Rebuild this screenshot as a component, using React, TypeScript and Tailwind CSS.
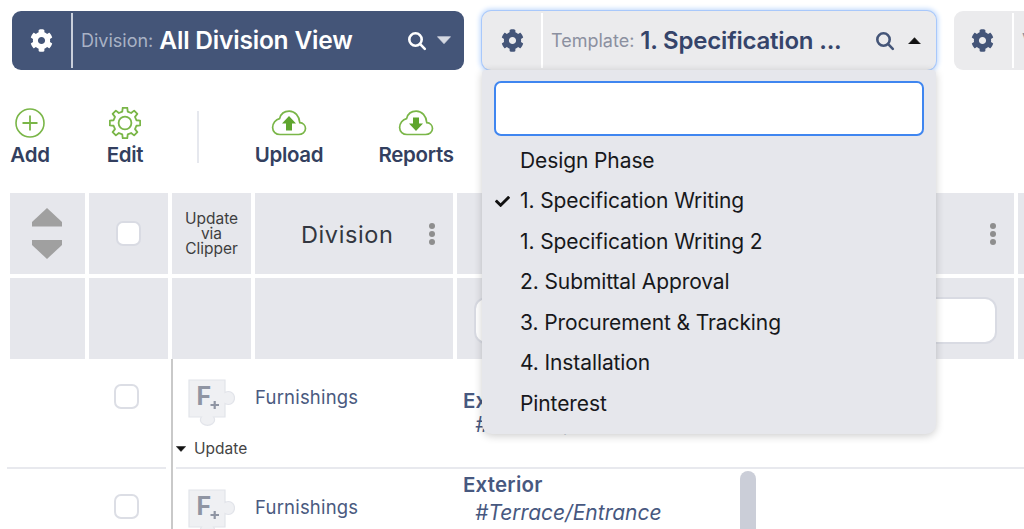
import { FaCog, FaCheck } from "react-icons/fa";

function gearPath(cx: number, cy: number, rOut: number, rIn: number, teeth: number) {
  const pts: string[] = [];
  const step = (Math.PI * 2) / teeth;
  for (let i = 0; i < teeth; i++) {
    const a = i * step - Math.PI / 2;
    const list: [number, number][] = [
      [rIn, a - step * 0.3],
      [rOut, a - step * 0.19],
      [rOut, a + step * 0.19],
      [rIn, a + step * 0.3],
    ];
    for (const [r, t] of list) {
      pts.push(`${(cx + r * Math.cos(t)).toFixed(2)} ${(cy + r * Math.sin(t)).toFixed(2)}`);
    }
  }
  return "M" + pts.join("L") + "Z";
}

function SearchIcon({ color }: { color: string }) {
  return (
    <svg width="20" height="20" viewBox="0 0 20 20" fill="none" stroke={color} strokeWidth="2.6" strokeLinecap="round">
      <circle cx="8.5" cy="8.5" r="6.2" />
      <path d="M13.2 13.2L17.8 17.8" />
    </svg>
  );
}

function Caret({ up, color, w = 12 }: { up?: boolean; color: string; w?: number }) {
  return (
    <svg width={w} height={w * 0.6} viewBox="0 0 12 7.2">
      <path d={up ? "M6 .6L11.6 6.6H.4Z" : "M.4 .6H11.6L6 6.6Z"} fill={color} stroke={color} strokeWidth=".6" strokeLinejoin="round" />
    </svg>
  );
}

function Cloud({ down }: { down?: boolean }) {
  return (
    <svg width="36" height="28" viewBox="0 0 36 28" fill="none">
      <path
        d="M9 25.5H27.5C31.4 25.5 34.5 23 34.5 19.6C34.5 16.4 32 13.9 28.8 13.7C28.3 7 24 2.2 18.2 2.2C13.4 2.2 9.7 5.2 8.6 9.6C4.7 10.4 1.6 14.4 1.6 18.6C1.6 22.6 4.9 25.5 9 25.5Z"
        stroke="#7ab648"
        strokeWidth="1.7"
      />
      {down ? (
        <path d="M15 8.500H21V14.500H25L18 22L11 14.500H15Z" fill="#5fa52e" />
      ) : (
        <path d="M18 7L25 14.500H21V21.500H15V14.500H11Z" fill="#5fa52e" />
      )}
    </svg>
  );
}

function Puzzle() {
  return (
    <svg width="47" height="47" viewBox="0 0 47 47" className="shrink-0">
      <path
        d="M1 1H37V13.500C38.200 12.800 39.400 12.500 40.500 12.500C43.800 12.500 46.500 15.400 46.500 19C46.500 22.600 43.800 25.500 40.500 25.500C39.400 25.500 38.200 25.200 37 24.500V38H25.500C26.300 39 26.600 40 26.600 41C26.600 44 23.200 46.300 19.500 46.300C15.800 46.300 12.400 44 12.400 41C12.400 40 12.700 39 13.500 38H1Z"
        fill="#eff0f3"
        stroke="#e2e4ea"
        strokeWidth="1.2"
      />
      <text x="8.500" y="26" fontSize="25" fontWeight="700" fill="#8f95a3" fontFamily="Inter, sans-serif">F</text>
      <path d="M22.500 26H31M26.700 22V30" stroke="#8f95a3" strokeWidth="2.200" />
    </svg>
  );
}

function Kebab() {
  return (
    <div className="flex flex-col gap-[2px]">
      <span className="w-[6px] h-[6px] rounded-full bg-[#8e8e8e]" />
      <span className="w-[6px] h-[6px] rounded-full bg-[#8e8e8e]" />
      <span className="w-[6px] h-[6px] rounded-full bg-[#8e8e8e]" />
    </div>
  );
}

function Tool({ label, width, children }: { label: string; width: string; children: React.ReactNode }) {
  return (
    <div className={`flex flex-col items-center shrink-0 ${width}`}>
      <div className="h-[30px] flex items-center justify-center">{children}</div>
      <span className="mt-[5px] text-[20.5px] leading-[24px] font-semibold text-[#333f5f] tracking-[-0.3px]">{label}</span>
    </div>
  );
}

function Row({ height, last }: { height: string; last?: boolean }) {
  return (
    <div className={`flex ${height}`}>
      <div className="w-[171px] shrink-0 pl-[7px] pr-[5px] flex">
        <div className={`flex-1 pl-[107px] ${last ? "" : "border-b-2 border-[#e8e9ee]"}`}>
          <div className="mt-[25px] w-[25px] h-[25px] rounded-[7px] border-2 border-[#dcdee5] bg-white" />
        </div>
      </div>
      <div className="w-[2px] shrink-0 bg-[#c9c9c9]" />
      <div className="flex-1 min-w-0 pl-[3px] flex">
        <div className={`relative flex-1 ${last ? "" : "border-b-2 border-[#e8e9ee]"}`}>
          <div className="flex">
            <div className="w-[287px] shrink-0 pl-[12px]">
              <div className="flex pt-[20px]">
                <Puzzle />
                <span className="ml-[20px] mt-[5px] text-[18.5px] leading-[26px] text-[#4a5a80] tracking-[0.2px]">Furnishings</span>
              </div>
            </div>
            <div className={last ? "pt-[4px]" : "pt-[30px]"}>
              <div className="text-[20.5px] leading-[24px] font-semibold text-[#47587f] tracking-[0.2px]">Exterior</div>
              <div className={`ml-[12px] text-[21px] leading-[24px] italic text-[#47587f] ${last ? "mt-[4px]" : "mt-[0px]"}`}>#Terrace/Entrance</div>
            </div>
          </div>
          {!last && (
            <div className="absolute left-0 top-[81px] flex items-center gap-[8px]">
              <Caret color="#111" w={10} />
              <span className="text-[15.5px] leading-[18px] text-[#444]">Update</span>
            </div>
          )}
        </div>
      </div>
    </div>
  );
}

export default function App() {
  const items = [
    "Design Phase",
    "1. Specification Writing",
    "1. Specification Writing 2",
    "2. Submittal Approval",
    "3. Procurement & Tracking",
    "4. Installation",
    "Pinterest",
  ];
  const gear = gearPath(15, 15, 14.4, 11, 8);
  return (
    <div className="relative w-[1024px] h-[529px] overflow-hidden bg-white font-['Inter',sans-serif]">
      {/* top selectors */}
      <div className="flex pt-[11px] pl-[12px] h-[70px]">
        <div className="w-[452px] h-[59px] shrink-0 rounded-[9px] bg-[#445578] flex items-center pr-[13px]">
          <div className="w-[59px] shrink-0 flex justify-center text-white"><FaCog size={23} /></div>
          <div className="w-[2px] h-[55px] shrink-0 bg-[#c9cfdb]" />
          <span className="ml-[8px] text-[18px] text-[#a9b2c5]">Division:</span>
          <span className="ml-[6px] text-[24.5px] font-semibold text-white tracking-[-0.2px]">All Division View</span>
          <div className="ml-auto flex items-center gap-[10px]">
            <SearchIcon color="#fff" />
            <Caret color="#d5d9e2" w={14} />
          </div>
        </div>
        <div className="ml-[18px] w-[454px] h-[59px] shrink-0 rounded-[9px] bg-[#ebebed] flex items-center pr-[15px] shadow-[0_0_0_1px_#a8c8fb,0_0_5px_2px_#bcd6fc]">
          <div className="w-[59px] shrink-0 pl-[1px] flex justify-center text-[#445578]"><FaCog size={23} /></div>
          <div className="w-[2px] h-[55px] shrink-0 bg-white" />
          <span className="ml-[8px] text-[18px] text-[#8b90a0]">Template:</span>
          <span className="ml-[6px] text-[24px] font-semibold text-[#35446a] tracking-[-0.2px]">1. Specification ...</span>
          <div className="ml-auto flex items-center gap-[13px]">
            <SearchIcon color="#445578" />
            <Caret up color="#111" w={13} />
          </div>
        </div>
        <div className="ml-[18px] w-[100px] h-[59px] shrink-0 rounded-[9px] bg-[#ebebed] flex items-center">
          <div className="w-[58px] shrink-0 pr-[1px] flex justify-center text-[#445578]"><FaCog size={23} /></div>
          <div className="w-[2px] h-[55px] shrink-0 bg-white" />
          <span className="ml-[8px] text-[18px] text-[#8b90a0]">View</span>
        </div>
      </div>

      {/* toolbar */}
      <div className="flex h-[123px] pt-[38px]">
        <Tool label="Add" width="w-[60px]">
          <svg width="30" height="30" viewBox="0 0 30 30" fill="none" stroke="#7ab648" strokeWidth="1.6">
            <circle cx="15" cy="15" r="14" />
            <path d="M7.500 15H22.500M15 7.500V22.500" strokeWidth="1.800" />
          </svg>
        </Tool>
        <div className="ml-[35px]">
          <Tool label="Edit" width="w-[60px]">
            <svg width="32" height="32" viewBox="0 0 30 30" fill="none" stroke="#7ab648" strokeWidth="1.700" strokeLinejoin="round">
              <path d={gear} />
              <circle cx="15" cy="15" r="6" />
            </svg>
          </Tool>
        </div>
        <div className="ml-[42px] w-[2px] h-[52px] mt-[3px] bg-[#e6e8ee]" />
        <div className="ml-[50px]">
          <Tool label="Upload" width="w-[80px]"><Cloud /></Tool>
        </div>
        <div className="ml-[47px]">
          <Tool label="Reports" width="w-[80px]"><Cloud down /></Tool>
        </div>
      </div>

      {/* table head */}
      <div className="grid grid-cols-[75px_79px_79px_198px_557px_60px] grid-rows-[81px_81px] gap-[4px] pl-[10px]">
        <div className="bg-[#e6e7ec] flex flex-col items-center justify-center gap-[13px] pr-[1px] pb-[1px]">
          <svg width="30" height="19" viewBox="0 0 30 19"><path d="M15 0L30 14V18.500H0V14Z" fill="#a0a0a0" /></svg>
          <svg width="30" height="19" viewBox="0 0 30 19"><path d="M0 0H30V5L15 19L0 5Z" fill="#a0a0a0" /></svg>
        </div>
        <div className="bg-[#e6e7ec] flex items-center justify-center">
          <div className="w-[25px] h-[25px] rounded-[7px] border-2 border-[#d9dbe3] bg-white" />
        </div>
        <div className="bg-[#e6e7ec] flex items-center justify-center text-center text-[15.5px] leading-[15px] text-[#3e3e40]">
          <div>Update<br />via<br />Clipper</div>
        </div>
        <div className="bg-[#e6e7ec] flex items-center pl-[46px] pr-[18px] justify-between">
          <span className="text-[23.5px] pt-[3px] text-[#333740] tracking-[0.6px]">Division</span>
          <Kebab />
        </div>
        <div className="bg-[#e6e7ec] flex items-center justify-end pr-[18px]"><Kebab /></div>
        <div className="bg-[#e6e7ec]" />
        <div className="bg-[#e6e7ec]" />
        <div className="bg-[#e6e7ec]" />
        <div className="bg-[#e6e7ec]" />
        <div className="bg-[#e6e7ec]" />
        <div className="bg-[#e6e7ec] flex items-center pl-[17px] pr-[17px] pt-[3px]">
          <div className="w-full h-[47px] rounded-[12px] bg-white border-2 border-[#d9dbe3]" />
        </div>
        <div className="bg-[#e6e7ec]" />
      </div>

      {/* rows */}
      <Row height="h-[110px]" />
      <Row height="h-[60px]" last />

      {/* grabber */}
      <div className="absolute left-[740px] top-[471px] w-[16px] h-[70px] rounded-[8px] bg-[#cbced8]" />

      {/* dropdown */}
      <div className="absolute left-[482px] top-[70px] w-[454px] h-[364px] rounded-b-[10px] rounded-t-[4px] bg-[#e6e7ec] shadow-[0_2px_8px_rgba(0,0,0,0.2)] px-[12px] pt-[11px]">
        <div className="h-[55px] rounded-[7px] bg-white border-2 border-[#3f86f0]" />
        <ul className="mt-[4px]">
          {items.map((t, i) => (
            <li key={t} className="relative h-[40.5px] flex items-center pl-[26px] text-[21px] text-[#17181b] tracking-[-0.1px]">
              {i === 1 && <FaCheck size={15} className="absolute left-[1px] top-[13px] text-[#111]" />}
              {t}
            </li>
          ))}
        </ul>
      </div>
    </div>
  );
}
